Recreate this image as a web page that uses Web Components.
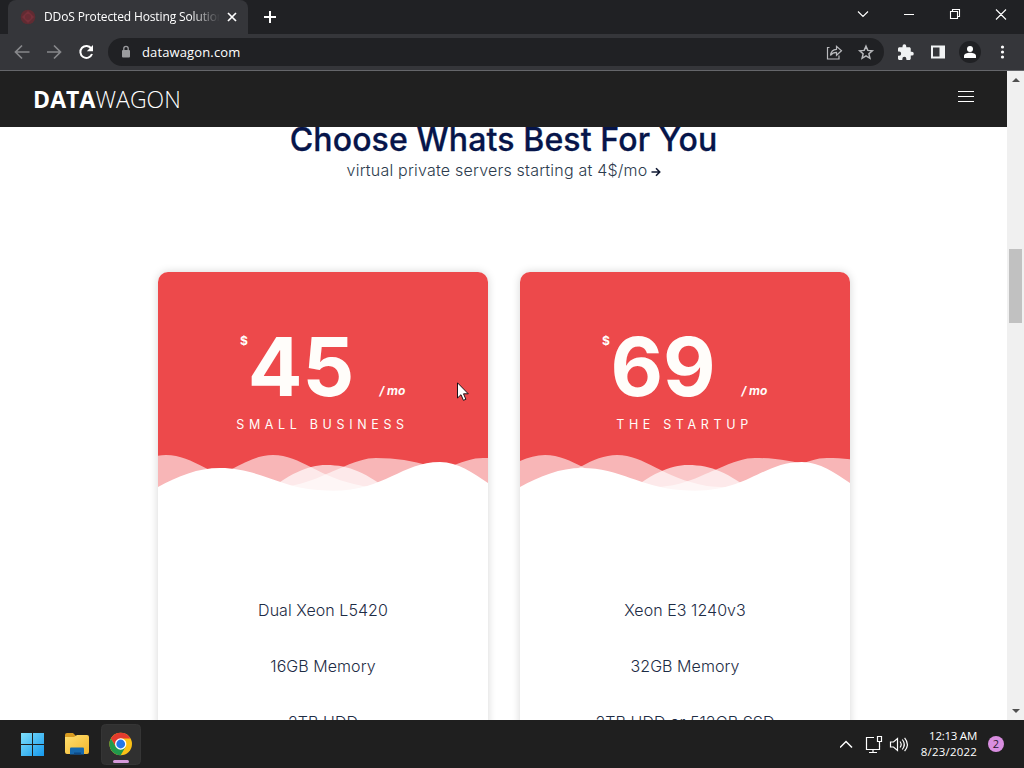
<!DOCTYPE html>
<html lang="en"><head><meta charset="utf-8"><title>DataWagon</title>
<style>
html,body{margin:0;width:1024px;height:768px;overflow:hidden;background:#fff}
</style></head><body>
<desk-top></desk-top>
<script>
const define=(name,html)=>customElements.define(name,class extends HTMLElement{
  connectedCallback(){
    if(this.shadowRoot)return;
    const t=document.createElement('template');
    t.innerHTML=typeof html==='function'?html(this):html;
    this.attachShadow({mode:'open'}).append(t.content.cloneNode(true));
  }
});

define('tab-strip',`<style>
:host{display:flex;height:34px;background:#202124;color:#fff;font:12px "Open Sans","Noto Sans",sans-serif}
.tab{box-sizing:border-box;width:240px;margin-left:8px;background:#35363a;border-radius:8px 8px 0 0;display:flex;align-items:center;padding-left:12px}
.title{width:176px;margin-left:8px;overflow:hidden;white-space:nowrap;letter-spacing:-.13px;line-height:34px;-webkit-mask:linear-gradient(90deg,#000 83%,transparent 100%);mask:linear-gradient(90deg,#000 83%,transparent 100%)}
.x{margin-left:6px}.plus{margin:10px 0 0 15px}.win{margin-left:auto;display:flex}
svg{display:block;flex:none}
</style>
<div class="tab"><svg width="16" height="16"><circle cx="8" cy="8" r="7.3" fill="#602b32"/><path d="M8 2L14 8 8 14 2 8Z" fill="#77303a"/><circle cx="8" cy="8" r="3" fill="#682c34"/></svg>
<span class="title">DDoS Protected Hosting Solutions</span>
<svg class="x" width="12" height="12" viewBox="0 0 12 12"><path d="M2 2l8 8M10 2l-8 8" stroke="#fff" stroke-width="1.7"/></svg></div>
<svg class="plus" width="14" height="14"><path d="M7 1v12M1 7h12" stroke="#fff" stroke-width="2"/></svg>
<svg class="win" width="184" height="34" fill="none" stroke="#fff" stroke-width="1.1"><path d="M18 11.500l5 5 5-5M64 14.500h10M110.500 11.500h7v7h-7zM112.500 11v-1.500h7v7h-1.500M156 9.500l10 10M166 9.500l-10 10"/></svg>`);

define('tool-bar',`<style>
:host{box-sizing:border-box;display:flex;height:37px;background:#35363a;border-bottom:1px solid #65666a;align-items:center;font:13px "Open Sans","Noto Sans",sans-serif;color:#fff}
.nav{margin-left:8px}.url{width:776px;height:28px;border-radius:14px;background:#202124;margin-left:8px;display:flex;align-items:center}
.lock{margin-left:12px}.addr{margin-left:10px;line-height:28px;letter-spacing:.13px}.tools{margin-left:auto;margin-right:6px}svg{display:block;flex:none}
.exts{margin-left:7px}
</style>
<svg class="nav" width="92" height="36" fill="none" stroke="#87888b" stroke-width="1.7"><path d="M21.500 18H8M14 11.500L7.500 18l6.500 6.500M39 18h13.500M46 11.500l6.500 6.500-6.500 6.500"/><path d="M83.300 14.500A6 6 0 1 0 84 20" stroke="#fff" stroke-width="2"/><path d="M85 11v6.200h-6.200z" fill="#fff" stroke="none"/></svg>
<div class="url"><svg class="lock" width="12" height="14"><rect x="2" y="5" width="8" height="7.500" rx="1" fill="#9b9c9f"/><path d="M3.800 5V3.500a2.200 2.200 0 0 1 4.400 0V5" fill="none" stroke="#9b9c9f" stroke-width="1.300"/></svg>
<span class="addr">datawagon.com</span>
<svg class="tools" width="54" height="28" fill="none" stroke="#b9babd" stroke-width="1.200"><path d="M5.500 9.500H3.500V21h11.500v-3.500"/><path d="M6.500 17.500c.4-4 2.500-6 6-6.200V8.300l5 4.500-5 4.500v-2.900c-2.600 0-4.500.8-6 3.100z"/><path d="M42 8.200l1.800 4.200 4.500.4-3.400 3 1 4.500-3.900-2.400-3.900 2.400 1-4.500-3.400-3 4.500-.4z" stroke-width="1.500"/></svg></div>
<svg class="exts" width="133" height="36"><path transform="translate(5.500 9.500) scale(.75)" fill="#f1f3f4" d="M20.500 11H19V7c0-1.100-.9-2-2-2h-4V3.500a2.500 2.500 0 0 0-5 0V5H4c-1.100 0-2 .9-2 2v3.800h1.500a2.700 2.700 0 0 1 0 5.400H2V20c0 1.100.9 2 2 2h3.800v-1.500a2.700 2.700 0 0 1 5.400 0V22H17c1.100 0 2-.9 2-2v-4h1.500a2.500 2.500 0 0 0 0-5z"/><path d="M40 11.500h14v13H40zm2 2v9h6.500v-9z" fill="#f1f3f4" fill-rule="evenodd"/><circle cx="79" cy="18" r="11" fill="#202124"/><circle cx="79" cy="15" r="3" fill="#fff"/><path d="M73 24v-2c0-2 3-3.200 6-3.200s6 1.200 6 3.200v2z" fill="#fff"/><g fill="#fff"><circle cx="111.500" cy="13" r="1.600"/><circle cx="111.500" cy="18" r="1.600"/><circle cx="111.500" cy="23" r="1.600"/></g></svg>`);

define('site-header',`<style>
:host{box-sizing:border-box;display:flex;height:56px;background:#202020;color:#fff;justify-content:space-between;align-items:center;padding:0 33px 0 33px;font:300 23px/54px "Open Sans",sans-serif}
.logo{letter-spacing:.05px}b{font-weight:700;letter-spacing:.1px}svg{margin-top:-6px}
</style><span class="logo"><b>DATA</b>WAGON</span><svg width="16" height="12"><path d="M0 1.500h16M0 6.500h16M0 11.500h16" stroke="#fff"/></svg>`);

define('section-head',`<style>
:host{display:flow-root;text-align:center;font-family:Inter,sans-serif;height:145px}
h2{margin:0;font-size:32px;font-weight:500;line-height:40px;margin-top:-7px;color:#06154a;letter-spacing:.13px;-webkit-text-stroke:.3px #06154a;height:33px;white-space:nowrap}
p{margin:0;font-size:16px;line-height:34px;color:#2c3b4d;font-weight:300;letter-spacing:.21px;padding-left:1px}svg{margin-left:4px;vertical-align:-1px}
</style><h2><slot name="title"></slot></h2><p><slot name="sub"></slot><svg width="10" height="10" fill="none" stroke="#111a33" stroke-width="1.600"><path d="M.5 5h8M5 1.300L8.700 5 5 8.700"/></svg></p>`);

const SWELL='M-85 60C-45 45-25 25 0 25C28 25 45 48 90 56C130 61 150 48 170 40C190 31 200 28 210 28C250 28 280 40 300 52V72H-85Z';
define('price-card',el=>{
  const [a,b]=el.getAttribute('swell').split(' ');
  return `<style>
:host{display:block;width:330px;height:520px;border-radius:10px;background:#fff;box-shadow:0 0 8px rgba(0,0,0,.17);font-family:Inter,sans-serif;overflow:hidden;flex:none}
.top{box-sizing:border-box;height:228px;background:#ed494b;color:#fffdfa;text-align:center;padding-top:53px;display:flex;flex-direction:column;align-items:center}
.price{display:flex;height:82px;font-weight:700;align-items:flex-start}
.cur{font-size:12px;line-height:16px;margin-top:8px;width:10px;text-align:left}
.num{font-size:81px;line-height:84px;width:102px;letter-spacing:0;white-space:nowrap;display:flex;justify-content:center}
.per{font-size:12px;font-style:italic;line-height:16px;margin:58px 0 0 27px;width:27px;white-space:nowrap}
.name{font-size:12.500px;line-height:16px;margin-top:10px;letter-spacing:4.650px;padding-right:1px;font-weight:400;white-space:nowrap}
.wave{display:block;margin-top:-3px;flex:none}
ul{list-style:none;margin:82px 0 0;padding:0;text-align:center}
::slotted(li){height:56px;line-height:56px;font-size:16px;font-weight:300;color:#1d2c45;letter-spacing:.05px}
</style><div class="top"><div class="price"><span class="cur">$</span><span class="num">${el.getAttribute('amount')}</span><span class="per">/ mo</span></div>
<div class="name">${el.getAttribute('plan')}</div>
<svg class="wave" width="330" height="70" fill="#fff"><path transform="translate(${a} 0)" d="${SWELL}" opacity=".6"/><path transform="translate(${b} 0)" d="${SWELL}" opacity=".6"/><path opacity=".7" d="M105 65C130 44 150 35 168 35C192 35 208 43 235 63Z"/><path d="M0 57C20 46 40 38 62 38C100 38 120 57 160 60C225 66 240 32 282 32C300 32 315 43 330 53V70H0Z"/></svg></div>
<ul><slot></slot></ul>`});

define('page-scrollbar',`<style>
:host{display:flex;flex-direction:column;width:17px;background:#f0f0f0;align-items:center;flex:none}
.thumb{width:13px;height:74px;background:#c1c1c1;margin:161px 0 auto;}svg{display:block}
</style><svg width="17" height="17"><path d="M5 11h8L9 7z" fill="#505050"/></svg><div class="thumb"></div><svg width="17" height="17"><path d="M5 6h8L9 10z" fill="#505050"/></svg>`);

define('web-page',`<style>
:host{display:flex;height:649px;overflow:hidden;background:#fff}
.view{width:1007px;overflow:hidden}.cards{display:flex;gap:32px;padding-left:158px}
site-header{position:relative;z-index:1}
</style><div class="view"><site-header></site-header>
<section-head><span slot="title">Choose Whats Best For You</span><span slot="sub">virtual private servers starting at 4$/mo</span></section-head>
<div class="cards"><price-card amount="45" plan="SMALL BUSINESS" swell="115 8"><li>Dual Xeon L5420</li><li>16GB Memory</li><li>2TB HDD</li></price-card>
<price-card amount="69" plan="THE STARTUP" swell="97 25"><li>Xeon E3 1240v3</li><li>32GB Memory</li><li>2TB HDD or 512GB SSD</li></price-card></div></div>
<page-scrollbar></page-scrollbar>`);

define('task-bar',`<style>
:host{display:flex;height:48px;background:#1f1f1f;color:#fff;align-items:center;font:11.500px/16px "Open Sans","Noto Sans",sans-serif}
svg{display:block;flex:none}.tray{margin-left:auto}.clock{width:62px;text-align:right;white-space:nowrap;letter-spacing:-.25px}.date{letter-spacing:.2px}
.badge{width:16px;height:16px;border-radius:8px;background:#d98ee0;color:#2b1730;text-align:center;margin:0 20px 0 11px;font-size:11px;line-height:16px}
</style>
<svg width="160" height="48"><defs><linearGradient id="w" x1="0" y1="0" x2="1" y2="1"><stop offset="0" stop-color="#7fe0fb"/><stop offset="1" stop-color="#1598ec"/></linearGradient><linearGradient id="f" x1="0" y1="0" x2="1" y2="1"><stop offset="0" stop-color="#ffdf70"/><stop offset="1" stop-color="#f3b62c"/></linearGradient></defs>
<path fill="url(#w)" d="M21 13h11v11H21zM33 13h11v11H33zM21 25h11v11H21zM33 25h11v11H33z"/>
<path d="M65 15q0-2 2-2h6l3 3v4H65z" fill="#d89b20"/><path d="M65 17h9l3-2h10q2 0 2 2v15q0 2-2 2H67q-2 0-2-2z" fill="url(#f)"/><path d="M70 34.500v-6q0-1 1-1h12q1 0 1 1v6z" fill="#1769ae"/><path d="M74 34.500v-2h7v2z" fill="#0e4b87"/>
<rect x="101.500" y="4.500" width="39" height="40" rx="4" fill="#303030" stroke="#353535"/>
<g transform="translate(120.700 24)"><circle r="11.300" fill="#fbc116"/><path d="M-9.800-5.600A11.300 11.300 0 0 1 9.800-5.600H0L-4.900 2.800Z" fill="#e33b2e"/><path d="M-9.800-5.600A11.300 11.300 0 0 0 0 11.300L4.900 2.800-4.900 2.800Z" fill="#219a4c"/><circle r="5.700" fill="#fff"/><circle r="4.400" fill="#2477e8"/></g>
<rect x="113" y="40" width="16" height="3" rx="1.500" fill="#d69adb"/></svg>
<svg class="tray" width="75" height="48" fill="none" stroke="#fff" stroke-width="1.200"><path d="M0 27.500l6-6 6 6" stroke-width="1.500"/><path d="M34 17.500h-7.500v12h13V26M33 29.500v3M29 32.500h8"/><path d="M37.500 16.500h4v5h-4zM39.500 21.500v5"/><path d="M50.500 22v5h3l4 3.500V18.500L53.500 22zM60 21.500q2.400 3 0 6M62.300 19.500q4 5 0 10M64.600 17.800q5.500 6.700 0 13.400"/></svg>
<div class="clock">12:13 AM<br><span class="date">8/23/2022</span></div><div class="badge">2</div>`);

define('desk-top',`<style>
:host{display:flex;flex-direction:column;width:1024px;height:768px;position:relative;overflow:hidden}
.cursor{position:absolute;left:457px;top:382px}
</style><tab-strip></tab-strip><tool-bar></tool-bar><web-page></web-page><task-bar></task-bar>
<svg class="cursor" width="13" height="20"><path d="M.5.800V16l3.500-3.300 2.400 5.600 2.500-1-2.400-5.500h4.800z" fill="#fff" stroke="#1b1116"/></svg>`);
</script></body></html>
